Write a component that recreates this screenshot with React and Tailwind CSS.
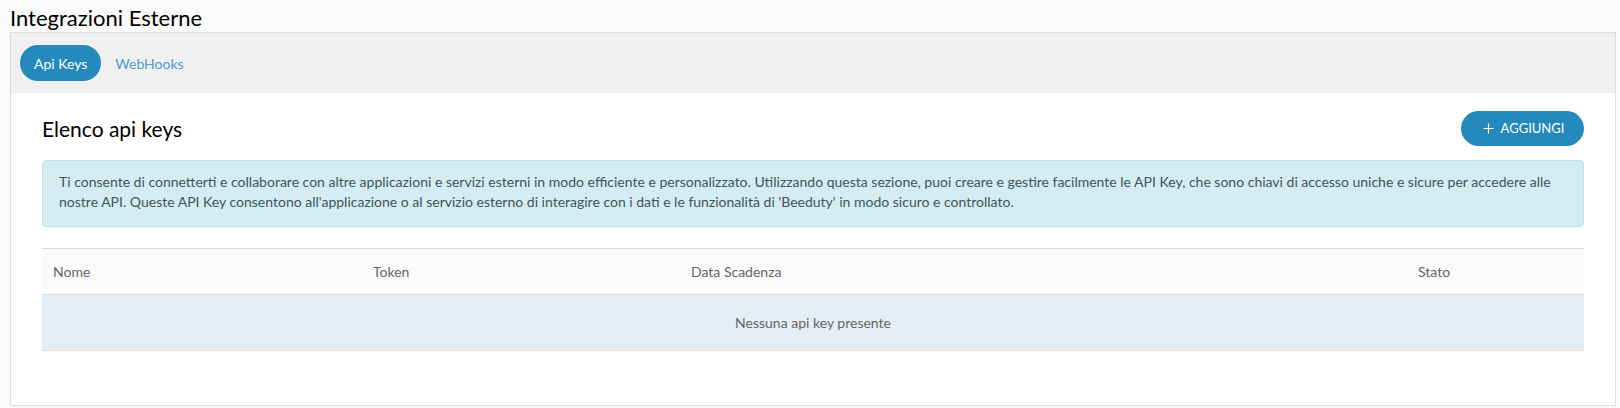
import React from "react";

export default function App() {
  return (
    <div className="min-h-[408px] bg-[#fafafa] pl-[10px] pr-[4px] pt-[3px] pb-[3px] font-['Lato',sans-serif]">
      <h1 className="text-[22px] leading-[29px] text-black">Integrazioni Esterne</h1>
      <div className="border border-[#dddddd] bg-white">
        <div className="flex items-center gap-[14px] bg-[#f0f0f0] px-[9px] py-[12px]">
          <button className="h-[36px] rounded-full bg-[#2589be] px-[14px] text-[14px] text-white">Api Keys</button>
          <button className="text-[14px] text-[#4f9bcf]">WebHooks</button>
        </div>
        <div className="px-[31px] pt-[18px] pb-[54px]">
          <div className="flex items-center justify-between">
            <h2 className="text-[21px] text-black">Elenco api keys</h2>
            <button className="flex h-[35px] w-[123px] items-center justify-center gap-[7px] rounded-full bg-[#2589be] pl-[2px] text-[13px] text-white">
              <svg width="11" height="11" viewBox="0 0 11 11" fill="none" stroke="white" strokeWidth="1.2">
                <path d="M5.5 0.5v10M0.5 5.5h10" />
              </svg>
              AGGIUNGI
            </button>
          </div>
          <div className="mt-[14px] rounded-[4px] border border-[#bee5eb] bg-[#d5edf2] px-[16px] pt-[11px] pb-[14px] text-[14px] leading-[20px] text-[#3b565c]">
            Ti consente di connetterti e collaborare con altre applicazioni e servizi esterni in modo efficiente e personalizzato. Utilizzando questa sezione, puoi creare e gestire facilmente le API Key, che sono chiavi di accesso uniche e sicure per accedere alle nostre API. Queste API Key consentono all'applicazione o al servizio esterno di interagire con i dati e le funzionalità di 'Beeduty' in modo sicuro e controllato.
          </div>
          <table className="mt-[21px] w-full table-fixed border-collapse text-[14px] text-[#666666]">
            <colgroup>
              <col className="w-[320px]" />
              <col className="w-[318px]" />
              <col />
              <col className="w-[177px]" />
            </colgroup>
            <thead>
              <tr className="h-[46px] border-y border-[#dddddd] bg-[#fafafa]">
                <th className="px-[11px] text-left font-normal">Nome</th>
                <th className="px-[11px] text-left font-normal">Token</th>
                <th className="px-[11px] text-left font-normal">Data Scadenza</th>
                <th className="px-[11px] text-left font-normal">Stato</th>
              </tr>
            </thead>
            <tbody>
              <tr className="h-[56px] border-b border-[#dddddd] bg-[#e6eef5]">
                <td colSpan={4} className="text-center">Nessuna api key presente</td>
              </tr>
            </tbody>
          </table>
        </div>
      </div>
    </div>
  );
}
